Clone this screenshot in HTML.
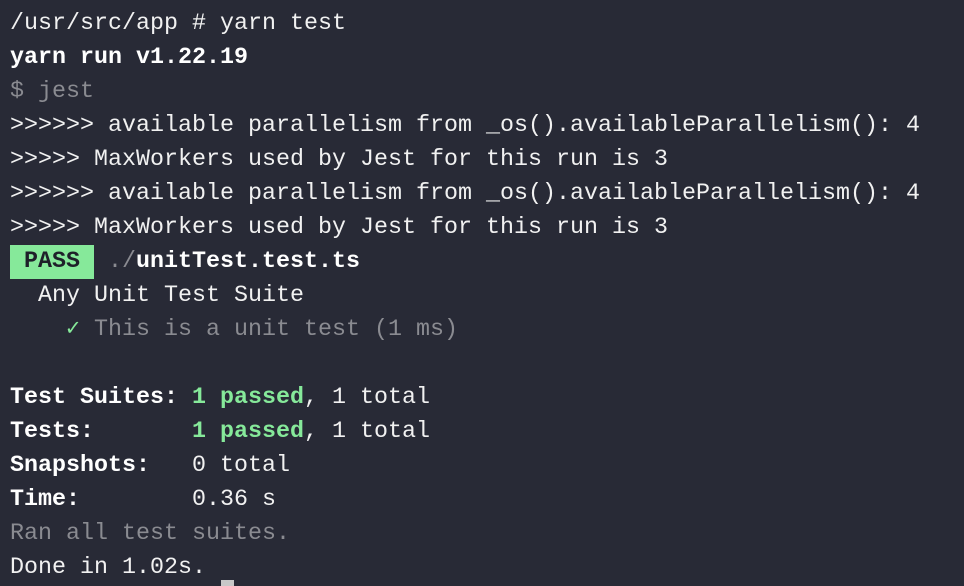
<!DOCTYPE html>
<html><head><meta charset="utf-8"><style>
html,body{margin:0;padding:0;background:#282a36;width:964px;height:586px;overflow:hidden}
pre{margin:0;position:absolute;left:10px;top:7px;font-family:"Liberation Mono","DejaVu Sans Mono",monospace;font-size:23.33px;line-height:34px;color:#f1f1f1;white-space:pre}
b{font-weight:bold;color:#fff}
.d{color:#8a8b91}
.g{color:#86e99a;font-weight:bold}
.pass{background:#86e99a;color:#1e2029;font-weight:bold;display:inline-block;line-height:34px}
.cur{position:absolute;left:221px;top:580px;width:13px;height:6px;background:#c8c8c8}
</style></head><body>
<pre>/usr/src/app # yarn test
<b>yarn run v1.22.19</b>
<span class="d">$ jest</span>
&gt;&gt;&gt;&gt;&gt;&gt; available parallelism from _os().availableParallelism(): 4
&gt;&gt;&gt;&gt;&gt; MaxWorkers used by Jest for this run is 3
&gt;&gt;&gt;&gt;&gt;&gt; available parallelism from _os().availableParallelism(): 4
&gt;&gt;&gt;&gt;&gt; MaxWorkers used by Jest for this run is 3
<span class="pass"> PASS </span> <span class="d">./</span><b>unitTest.test.ts</b>
  Any Unit Test Suite
    <span style="color:#86e99a">✓</span> <span class="d">This is a unit test (1 ms)</span>

<b>Test Suites: </b><span class="g">1 passed</span>, 1 total
<b>Tests:       </b><span class="g">1 passed</span>, 1 total
<b>Snapshots:   </b>0 total
<b>Time:        </b>0.36 s
<span class="d">Ran all test suites.</span>
Done in 1.02s.</pre>
<div class="cur"></div>
</body></html>
